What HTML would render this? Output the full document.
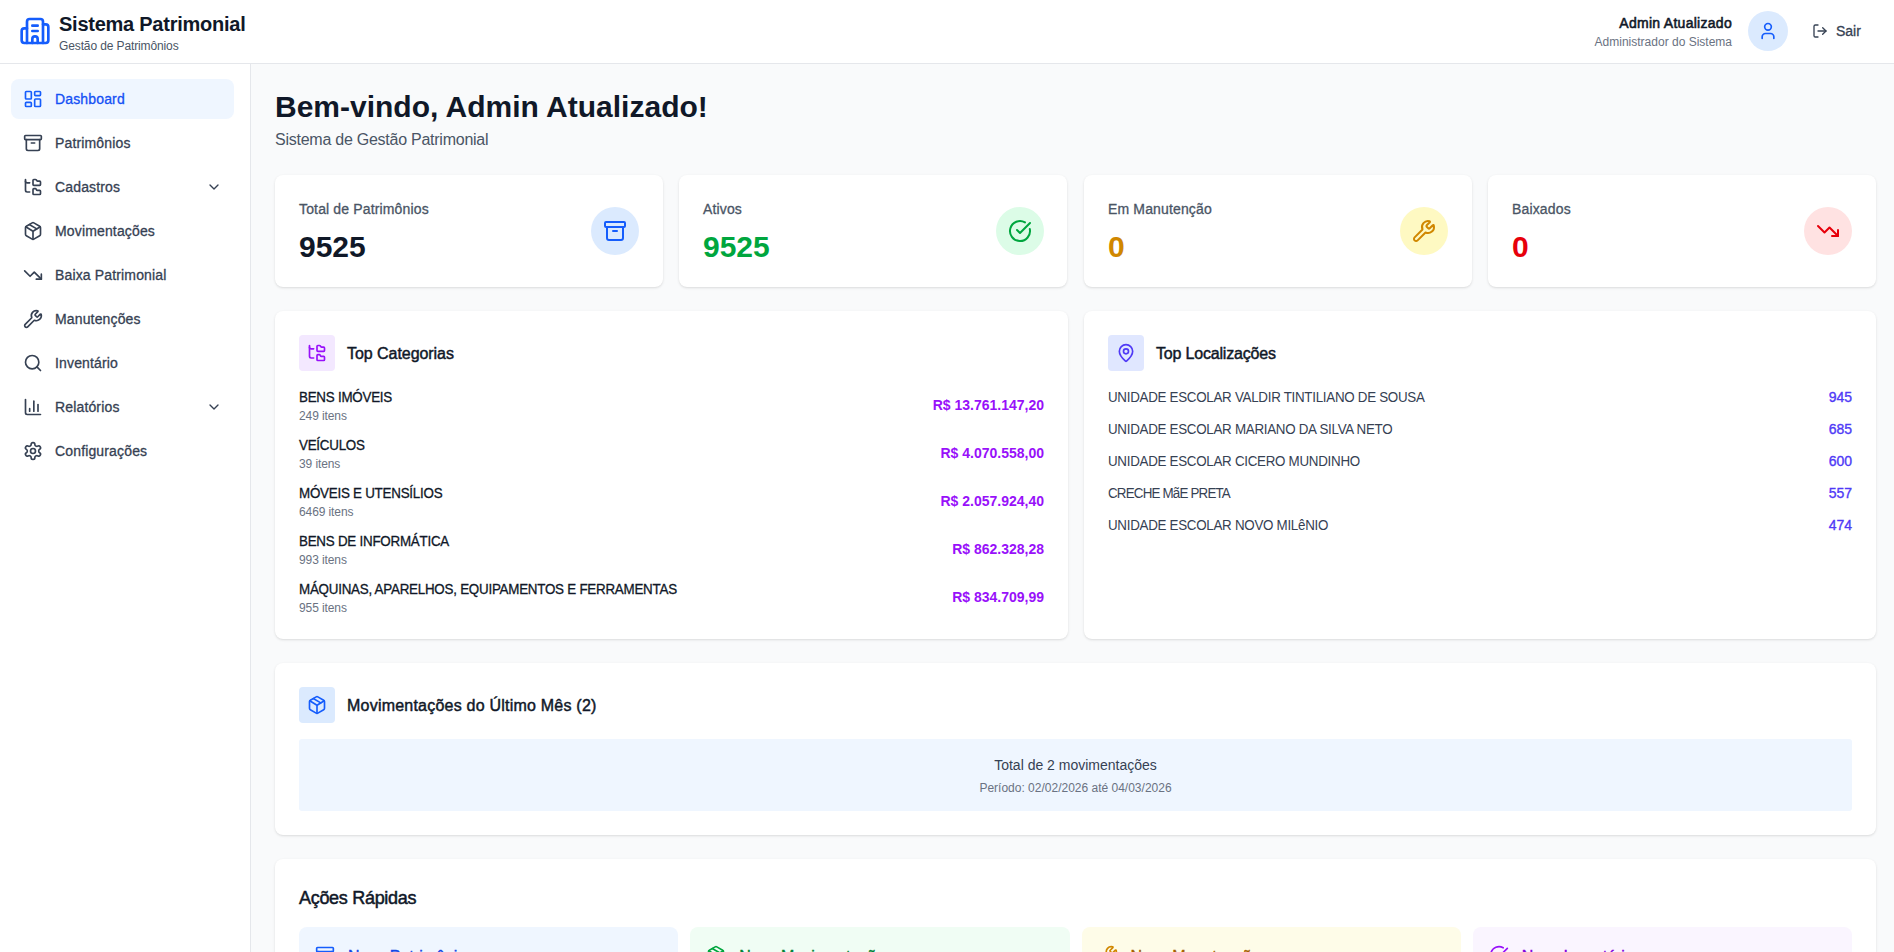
<!DOCTYPE html>
<html lang="pt-BR">
<head>
<meta charset="utf-8">
<title>Sistema Patrimonial</title>
<style>
*{box-sizing:border-box;margin:0;padding:0}
html,body{width:1894px;height:952px;overflow:hidden}
body{font-family:"Liberation Sans",sans-serif;background:#f9fafb;color:#101828;position:relative}
svg{display:block;fill:none;stroke:currentColor;stroke-width:2;stroke-linecap:round;stroke-linejoin:round}
.abs{position:absolute}
/* header */
#hdr{position:absolute;left:0;top:0;width:1894px;height:64px;background:#fff;border-bottom:1px solid #e5e7eb}
#logo{position:absolute;left:19px;top:15px;width:32px;height:32px;color:#155dfc}
#brand{position:absolute;left:59px;top:10px}
#brand .t{font-size:20px;line-height:28px;font-weight:700;color:#101828;letter-spacing:-0.25px;white-space:nowrap}
#brand .s{font-size:12px;line-height:16px;color:#4a5565;margin-top:0px;letter-spacing:-0.12px;white-space:nowrap}
#user{position:absolute;right:162px;top:13px;text-align:right}
#user .n{font-size:14px;line-height:20px;font-weight:400;-webkit-text-stroke:0.55px #101828;color:#101828;letter-spacing:0.28px;white-space:nowrap}
#user .r{font-size:12px;line-height:16px;color:#6a7282;white-space:nowrap;margin-top:1px}
#avatar{position:absolute;left:1748px;top:11px;width:40px;height:40px;border-radius:50%;background:#dbeafe;color:#155dfc}
#avatar svg{position:absolute;left:10px;top:10px;width:20px;height:20px}
#logout{position:absolute;left:1812px;top:23px;width:16px;height:16px;color:#364153}
#sair{position:absolute;left:1836px;top:21px;font-size:14px;line-height:20px;color:#364153;-webkit-text-stroke:0.3px #364153}
/* sidebar */
#side{position:absolute;left:0;top:64px;width:251px;height:888px;background:#fff;border-right:1px solid #e5e7eb}
.nav{position:absolute;left:11px;width:223px;height:40px;border-radius:8px;color:#364153}
.nav svg.i{position:absolute;left:12px;top:10px;width:20px;height:20px}
.nav span{position:absolute;left:44px;top:10px;font-size:14px;line-height:20px;white-space:nowrap;-webkit-text-stroke:0.3px currentColor;letter-spacing:0.15px}
.nav svg.c{position:absolute;left:195px;top:12px;width:16px;height:16px}
.nav.act{background:#eff6ff;color:#155dfc}.nav.act span{color:#1450f5;-webkit-text-stroke-color:#1450f5}
/* main */
h1{position:absolute;left:275px;top:89px;font-size:30px;line-height:36px;font-weight:700;color:#101828;white-space:nowrap}
#sub{position:absolute;left:275px;top:128px;font-size:16px;line-height:24px;color:#4a5565;white-space:nowrap;letter-spacing:-0.25px}
.card{position:absolute;background:#fff;border-radius:8px;box-shadow:0 1px 3px 0 rgba(0,0,0,.1),0 1px 2px -1px rgba(0,0,0,.1)}
.stat{top:175px;width:388px;height:112px}
.stat .l{position:absolute;left:24px;top:24px;font-size:14px;line-height:20px;color:#4a5565;white-space:nowrap;-webkit-text-stroke:0.3px #4a5565;letter-spacing:0.15px}
.stat .v{position:absolute;left:24px;top:53.5px;font-size:30px;line-height:36px;font-weight:700;white-space:nowrap}
.stat .ic{position:absolute;right:24px;top:32px;width:48px;height:48px;border-radius:50%}
.stat .ic svg{position:absolute;left:12px;top:12px;width:24px;height:24px}
.box{position:absolute;left:24px;top:24px;width:36px;height:36px;border-radius:4px}
.box svg{position:absolute;left:8px;top:8px;width:20px;height:20px}
.ct{position:absolute;left:72px;top:30.5px;font-size:16px;line-height:24px;font-weight:400;-webkit-text-stroke:0.45px #101828;letter-spacing:-0.05px;white-space:nowrap;color:#101828}
.cat{position:absolute;left:24px;right:24px;height:36px}
.cat .n{position:absolute;left:0;top:0;font-size:14px;line-height:20px;color:#101828;white-space:nowrap;letter-spacing:-0.25px;-webkit-text-stroke:0.3px #101828;transform:scaleX(0.955);transform-origin:0 0}
.cat .q{position:absolute;left:0;top:21px;letter-spacing:-0.1px;font-size:12px;line-height:16px;color:#6a7282;white-space:nowrap}
.cat .p{position:absolute;right:0;top:8px;font-size:14px;line-height:20px;font-weight:700;color:#9810fa;white-space:nowrap}
.loc{position:absolute;left:24px;right:24px;height:20px}
.loc .n{position:absolute;left:0;top:0;font-size:14px;line-height:20px;color:#364153;white-space:nowrap;letter-spacing:-0.3px;transform:scaleX(0.955);transform-origin:0 0}
.loc .p{position:absolute;right:0;top:0;font-size:14px;line-height:20px;font-weight:400;-webkit-text-stroke:0.35px #4f39f6;color:#4f39f6;white-space:nowrap}
#inner{position:absolute;left:24px;top:76px;width:1553px;height:72px;background:#eff6ff;border-radius:3px;text-align:center}
#inner .a{position:absolute;left:0;right:0;top:16px;font-size:14px;line-height:20px;color:#364153}
#inner .b{position:absolute;left:0;right:0;top:41px;font-size:12px;line-height:16px;color:#6a7282}
.qa{position:absolute;top:68px;width:379.25px;height:100px;border-radius:8px}
.qa svg{position:absolute;left:16px;top:18px;width:20px;height:20px}
.qa span{position:absolute;left:49px;top:18px;font-size:16px;line-height:24px;font-weight:400;-webkit-text-stroke:0.4px currentColor;white-space:nowrap}
</style>
</head>
<body>
<div id="hdr">
  <svg id="logo" viewBox="0 0 24 24"><path d="M10 12h4"/><path d="M10 8h4"/><path d="M14 21v-3a2 2 0 0 0-4 0v3"/><path d="M6 10H4a2 2 0 0 0-2 2v7a2 2 0 0 0 2 2h16a2 2 0 0 0 2-2V9a2 2 0 0 0-2-2h-2"/><path d="M6 21V5a2 2 0 0 1 2-2h8a2 2 0 0 1 2 2v16"/></svg>
  <div id="brand"><div class="t">Sistema Patrimonial</div><div class="s">Gestão de Patrimônios</div></div>
  <div id="user"><div class="n">Admin Atualizado</div><div class="r">Administrador do Sistema</div></div>
  <div id="avatar"><svg viewBox="0 0 24 24"><path d="M19 21v-2a4 4 0 0 0-4-4H9a4 4 0 0 0-4 4v2"/><circle cx="12" cy="7" r="4"/></svg></div>
  <svg id="logout" viewBox="0 0 24 24"><path d="m16 17 5-5-5-5"/><path d="M21 12H9"/><path d="M9 21H5a2 2 0 0 1-2-2V5a2 2 0 0 1 2-2h4"/></svg>
  <div id="sair">Sair</div>
</div>

<div id="side">
  <div class="nav act" style="top:15px"><svg class="i" viewBox="0 0 24 24"><rect width="7" height="9" x="3" y="3" rx="1"/><rect width="7" height="5" x="14" y="3" rx="1"/><rect width="7" height="9" x="14" y="12" rx="1"/><rect width="7" height="5" x="3" y="16" rx="1"/></svg><span>Dashboard</span></div>
  <div class="nav" style="top:59px"><svg class="i" viewBox="0 0 24 24"><rect width="20" height="5" x="2" y="3" rx="1"/><path d="M4 8v11a2 2 0 0 0 2 2h12a2 2 0 0 0 2-2V8"/><path d="M10 12h4"/></svg><span>Patrimônios</span></div>
  <div class="nav" style="top:103px"><svg class="i" viewBox="0 0 24 24"><path d="M20 10a1 1 0 0 0 1-1V6a1 1 0 0 0-1-1h-2.5a1 1 0 0 1-.8-.4l-.9-1.2A1 1 0 0 0 15 3h-2a1 1 0 0 0-1 1v5a1 1 0 0 0 1 1Z"/><path d="M20 21a1 1 0 0 0 1-1v-3a1 1 0 0 0-1-1h-2.9a1 1 0 0 1-.88-.55l-.42-.85a1 1 0 0 0-.92-.6H13a1 1 0 0 0-1 1v5a1 1 0 0 0 1 1Z"/><path d="M3 5a2 2 0 0 0 2 2h3"/><path d="M3 3v13a2 2 0 0 0 2 2h3"/></svg><span>Cadastros</span><svg class="c" viewBox="0 0 24 24"><path d="m6 9 6 6 6-6"/></svg></div>
  <div class="nav" style="top:147px"><svg class="i" viewBox="0 0 24 24"><path d="M11 21.73a2 2 0 0 0 2 0l7-4A2 2 0 0 0 21 16V8a2 2 0 0 0-1-1.73l-7-4a2 2 0 0 0-2 0l-7 4A2 2 0 0 0 3 8v8a2 2 0 0 0 1 1.73z"/><path d="M12 22V12"/><path d="m3.3 7 7.703 4.734a2 2 0 0 0 1.994 0L20.7 7"/><path d="m7.5 4.27 9 5.15"/></svg><span>Movimentações</span></div>
  <div class="nav" style="top:191px"><svg class="i" viewBox="0 0 24 24"><polyline points="22 17 13.5 8.5 8.5 13.5 2 7"/><polyline points="16 17 22 17 22 11"/></svg><span>Baixa Patrimonial</span></div>
  <div class="nav" style="top:235px"><svg class="i" viewBox="0 0 24 24"><path d="M14.7 6.3a1 1 0 0 0 0 1.4l1.6 1.6a1 1 0 0 0 1.4 0l3.106-3.105c.32-.322.863-.22.983.218a6 6 0 0 1-8.259 7.057l-7.91 7.91a1 1 0 0 1-2.999-3l7.91-7.91a6 6 0 0 1 7.057-8.259c.438.12.54.662.219.984z"/></svg><span>Manutenções</span></div>
  <div class="nav" style="top:279px"><svg class="i" viewBox="0 0 24 24"><circle cx="11" cy="11" r="8"/><path d="m21 21-4.3-4.3"/></svg><span>Inventário</span></div>
  <div class="nav" style="top:323px"><svg class="i" viewBox="0 0 24 24"><path d="M3 3v16a2 2 0 0 0 2 2h16"/><path d="M18 17V9"/><path d="M13 17V5"/><path d="M8 17v-3"/></svg><span>Relatórios</span><svg class="c" viewBox="0 0 24 24"><path d="m6 9 6 6 6-6"/></svg></div>
  <div class="nav" style="top:367px"><svg class="i" viewBox="0 0 24 24"><path d="M12.22 2h-.44a2 2 0 0 0-2 2v.18a2 2 0 0 1-1 1.73l-.43.25a2 2 0 0 1-2 0l-.15-.08a2 2 0 0 0-2.73.73l-.22.38a2 2 0 0 0 .73 2.73l.15.1a2 2 0 0 1 1 1.72v.51a2 2 0 0 1-1 1.74l-.15.09a2 2 0 0 0-.73 2.73l.22.38a2 2 0 0 0 2.730.73l.15-.08a2 2 0 0 1 2 0l.43.25a2 2 0 0 1 1 1.73V20a2 2 0 0 0 2 2h.44a2 2 0 0 0 2-2v-.18a2 2 0 0 1 1-1.73l.43-.25a2 2 0 0 1 2 0l.15.08a2 2 0 0 0 2.73-.73l.22-.39a2 2 0 0 0-.73-2.73l-.15-.08a2 2 0 0 1-1-1.74v-.5a2 2 0 0 1 1-1.74l.15-.09a2 2 0 0 0 .73-2.73l-.22-.38a2 2 0 0 0-2.73-.73l-.15.08a2 2 0 0 1-2 0l-.43-.25a2 2 0 0 1-1-1.73V4a2 2 0 0 0-2-2z"/><circle cx="12" cy="12" r="3"/></svg><span>Configurações</span></div>
</div>

<h1>Bem-vindo, Admin Atualizado!</h1>
<div id="sub">Sistema de Gestão Patrimonial</div>

<!-- STATS -->
<div class="card stat" style="left:275px">
  <div class="l">Total de Patrimônios</div><div class="v" style="color:#101828">9525</div>
  <div class="ic" style="background:#dbeafe;color:#155dfc"><svg viewBox="0 0 24 24"><rect width="20" height="5" x="2" y="3" rx="1"/><path d="M4 8v11a2 2 0 0 0 2 2h12a2 2 0 0 0 2-2V8"/><path d="M10 12h4"/></svg></div>
</div>
<div class="card stat" style="left:679px">
  <div class="l">Ativos</div><div class="v" style="color:#00a63e">9525</div>
  <div class="ic" style="background:#dcfce7;color:#00a63e;right:23px"><svg viewBox="0 0 24 24"><path d="M21.801 10A10 10 0 1 1 17 3.335"/><path d="m9 11 3 3L22 4"/></svg></div>
</div>
<div class="card stat" style="left:1084px">
  <div class="l">Em Manutenção</div><div class="v" style="color:#d08700">0</div>
  <div class="ic" style="background:#fef9c2;color:#d08700"><svg viewBox="0 0 24 24"><path d="M14.7 6.3a1 1 0 0 0 0 1.4l1.6 1.6a1 1 0 0 0 1.4 0l3.106-3.105c.32-.322.863-.22.983.218a6 6 0 0 1-8.259 7.057l-7.91 7.91a1 1 0 0 1-2.999-3l7.91-7.91a6 6 0 0 1 7.057-8.259c.438.12.54.662.219.984z"/></svg></div>
</div>
<div class="card stat" style="left:1488px">
  <div class="l">Baixados</div><div class="v" style="color:#e7000b">0</div>
  <div class="ic" style="background:#ffe2e2;color:#e7000b"><svg viewBox="0 0 24 24"><polyline points="22 17 13.5 8.5 8.5 13.5 2 7"/><polyline points="16 17 22 17 22 11"/></svg></div>
</div>

<!-- TOP CATEGORIAS -->
<div class="card" style="left:275px;top:311px;width:793px;height:328px">
  <div class="box" style="background:#f3e8ff;color:#9810fa"><svg viewBox="0 0 24 24"><path d="M20 10a1 1 0 0 0 1-1V6a1 1 0 0 0-1-1h-2.5a1 1 0 0 1-.8-.4l-.9-1.2A1 1 0 0 0 15 3h-2a1 1 0 0 0-1 1v5a1 1 0 0 0 1 1Z"/><path d="M20 21a1 1 0 0 0 1-1v-3a1 1 0 0 0-1-1h-2.9a1 1 0 0 1-.88-.55l-.42-.85a1 1 0 0 0-.92-.6H13a1 1 0 0 0-1 1v5a1 1 0 0 0 1 1Z"/><path d="M3 5a2 2 0 0 0 2 2h3"/><path d="M3 3v13a2 2 0 0 0 2 2h3"/></svg></div>
  <div class="ct">Top Categorias</div>
  <div class="cat" style="top:76px"><div class="n">BENS IMÓVEIS</div><div class="q">249 itens</div><div class="p">R$ 13.761.147,20</div></div>
  <div class="cat" style="top:124px"><div class="n">VEÍCULOS</div><div class="q">39 itens</div><div class="p">R$ 4.070.558,00</div></div>
  <div class="cat" style="top:172px"><div class="n">MÓVEIS E UTENSÍLIOS</div><div class="q">6469 itens</div><div class="p">R$ 2.057.924,40</div></div>
  <div class="cat" style="top:220px"><div class="n">BENS DE INFORMÁTICA</div><div class="q">993 itens</div><div class="p">R$ 862.328,28</div></div>
  <div class="cat" style="top:268px"><div class="n">MÁQUINAS, APARELHOS, EQUIPAMENTOS E FERRAMENTAS</div><div class="q">955 itens</div><div class="p">R$ 834.709,99</div></div>
</div>

<!-- TOP LOCALIZACOES -->
<div class="card" style="left:1084px;top:311px;width:792px;height:328px">
  <div class="box" style="background:#e0e7ff;color:#4f39f6"><svg viewBox="0 0 24 24"><path d="M20 10c0 4.993-5.539 10.193-7.399 11.799a1 1 0 0 1-1.202 0C9.539 20.193 4 14.993 4 10a8 8 0 0 1 16 0"/><circle cx="12" cy="10" r="3"/></svg></div>
  <div class="ct" style="letter-spacing:-0.18px">Top Localizações</div>
  <div class="loc" style="top:76px"><div class="n">UNIDADE ESCOLAR VALDIR TINTILIANO DE SOUSA</div><div class="p">945</div></div>
  <div class="loc" style="top:108px"><div class="n">UNIDADE ESCOLAR MARIANO DA SILVA NETO</div><div class="p">685</div></div>
  <div class="loc" style="top:140px"><div class="n">UNIDADE ESCOLAR CICERO MUNDINHO</div><div class="p">600</div></div>
  <div class="loc" style="top:172px"><div class="n" style="letter-spacing:-0.85px">CRECHE MãE PRETA</div><div class="p">557</div></div>
  <div class="loc" style="top:204px"><div class="n">UNIDADE ESCOLAR NOVO MILêNIO</div><div class="p">474</div></div>
</div>

<!-- MOVIMENTACOES -->
<div class="card" style="left:275px;top:663px;width:1601px;height:172px">
  <div class="box" style="background:#dbeafe;color:#155dfc"><svg viewBox="0 0 24 24"><path d="M11 21.73a2 2 0 0 0 2 0l7-4A2 2 0 0 0 21 16V8a2 2 0 0 0-1-1.73l-7-4a2 2 0 0 0-2 0l-7 4A2 2 0 0 0 3 8v8a2 2 0 0 0 1 1.73z"/><path d="M12 22V12"/><path d="m3.3 7 7.703 4.734a2 2 0 0 0 1.994 0L20.7 7"/><path d="m7.5 4.27 9 5.15"/></svg></div>
  <div class="ct" style="letter-spacing:0.22px">Movimentações do Último Mês (2)</div>
  <div id="inner"><div class="a">Total de 2 movimentações</div><div class="b">Período: 02/02/2026 até 04/03/2026</div></div>
</div>

<!-- ACOES RAPIDAS -->
<div class="card" style="left:275px;top:859px;width:1601px;height:200px">
  <div class="abs" style="left:24px;top:25px;font-size:18px;line-height:28px;font-weight:400;-webkit-text-stroke:0.5px #101828;letter-spacing:-0.3px;white-space:nowrap;color:#101828">Ações Rápidas</div>
  <div class="qa" style="left:24px;background:#eff6ff;color:#155dfc"><svg viewBox="0 0 24 24"><rect width="20" height="5" x="2" y="3" rx="1"/><path d="M4 8v11a2 2 0 0 0 2 2h12a2 2 0 0 0 2-2V8"/><path d="M10 12h4"/></svg><span style="color:#1447e6">Novo Patrimônio</span></div>
  <div class="qa" style="left:415.25px;background:#f0fdf4;color:#00a63e"><svg viewBox="0 0 24 24"><path d="M11 21.73a2 2 0 0 0 2 0l7-4A2 2 0 0 0 21 16V8a2 2 0 0 0-1-1.73l-7-4a2 2 0 0 0-2 0l-7 4A2 2 0 0 0 3 8v8a2 2 0 0 0 1 1.73z"/><path d="M12 22V12"/><path d="m3.3 7 7.703 4.734a2 2 0 0 0 1.994 0L20.7 7"/><path d="m7.5 4.27 9 5.15"/></svg><span style="color:#008236">Nova Movimentação</span></div>
  <div class="qa" style="left:806.5px;background:#fefce8;color:#d08700"><svg viewBox="0 0 24 24"><path d="M14.7 6.3a1 1 0 0 0 0 1.4l1.6 1.6a1 1 0 0 0 1.4 0l3.106-3.105c.32-.322.863-.22.983.218a6 6 0 0 1-8.259 7.057l-7.91 7.91a1 1 0 0 1-2.999-3l7.91-7.91a6 6 0 0 1 7.057-8.259c.438.12.54.662.219.984z"/></svg><span style="color:#a65f00">Nova Manutenção</span></div>
  <div class="qa" style="left:1197.75px;background:#faf5ff;color:#9810fa"><svg viewBox="0 0 24 24"><path d="M21.801 10A10 10 0 1 1 17 3.335"/><path d="m9 11 3 3L22 4"/></svg><span style="color:#8200db">Novo Inventário</span></div>
</div>
</body>
</html>
